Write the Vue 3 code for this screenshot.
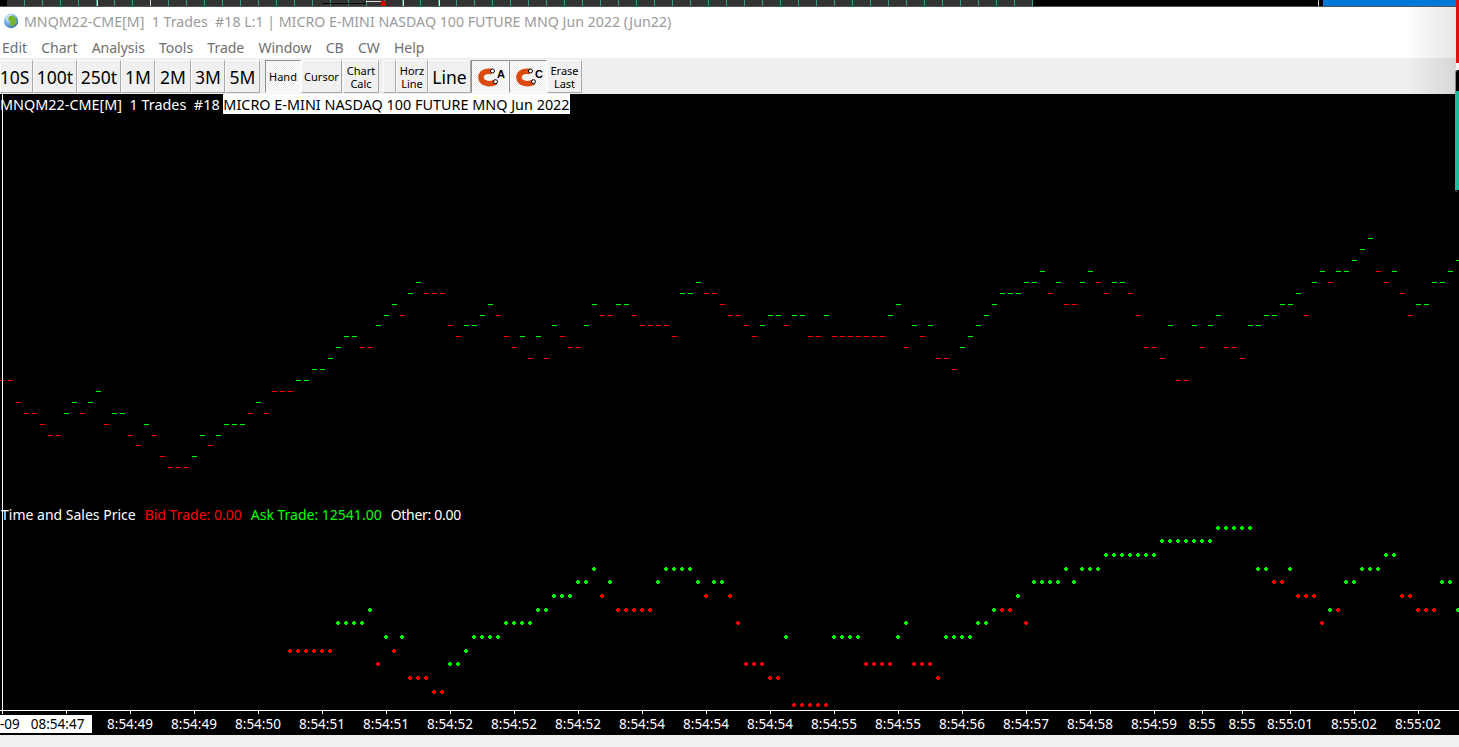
<template>
  <div class="screen">
    <svg class="behind" width="1459" height="7" viewBox="0 0 1459 7" shape-rendering="crispEdges">
      <rect x="0" y="0" width="1032" height="6" fill="#333" />
      <rect x="0" y="0" width="7" height="6" fill="#000" />
      <rect x="1032" y="0" width="427" height="7" fill="#000" />
      <rect v-for="x in stripTicks" :key="x" :x="x" y="0" width="1" height="6" fill="#2f9e8c" />
      <rect v-for="x in [97, 150, 403, 439]" :key="x" :x="x" y="0" width="1" height="6" fill="#ddd" />
      <rect x="322" y="3" width="44" height="1" fill="#000" />
      <rect x="366" y="1" width="15" height="1" fill="#ddd" />
      <rect x="381" y="1" width="5" height="5" fill="#e00000" />
      <rect x="1318" y="0" width="1" height="6" fill="#ccc" />
      <rect x="1323" y="0" width="133" height="6" fill="#0078d7" />
      <rect x="0" y="6" width="1459" height="1" fill="#555" />
    </svg>

    <div class="title-bar">
      <svg class="globe" width="16" height="16" viewBox="0 0 16 16">
        <defs>
          <radialGradient id="sea" cx="0.35" cy="0.25" r="0.85">
            <stop offset="0" stop-color="#e4f3fb" />
            <stop offset="0.55" stop-color="#6fb0dc" />
            <stop offset="1" stop-color="#2c5f96" />
          </radialGradient>
        </defs>
        <circle cx="8" cy="8" r="7.200" fill="url(#sea)" />
        <path d="M6 3.500 C8.500 2.500 11 3 12.500 5 C14 7 14 9.500 12.500 11 C11 12.500 9 13.500 7.500 13 C7 11 8 9.500 6.800 8.500 C5.200 7.500 4.800 5 6 3.500z" fill="#7ab42e" />
      </svg>
      <span>MNQM22-CME[M]&nbsp; 1 Trades&nbsp; #18 L:1 | MICRO E-MINI NASDAQ 100 FUTURE MNQ Jun 2022 (Jun22)</span>
    </div>

    <div class="menu-bar">
      <span v-for="item in menus" :key="item">{{ item }}</span>
    </div>

    <div class="tool-bar">
      <template v-for="btn in buttons" :key="btn.id">
        <div
          class="tool-btn"
          :class="{ big: btn.big, down: btn.down, first: btn.id === '10s' }"
          :style="{ width: btn.w + 'px', marginLeft: (btn.gap || 0) + 'px' }"
        >
          <template v-if="btn.magnet">
            <svg width="36" height="31" viewBox="0 0 36 31">
              <path d="M20 10.500 C12 9 8.500 13 9 17 C9.500 22 17 24.500 24 21" fill="none" stroke="#dd4a10" stroke-width="5.500" />
              <circle cx="20.500" cy="10" r="2" fill="#fff" stroke="#000" stroke-width="1" />
              <circle cx="23.500" cy="20.700" r="2" fill="#fff" stroke="#000" stroke-width="1" />
              <text x="25" y="16.500" class="magnet-letter">{{ btn.magnet }}</text>
            </svg>
          </template>
          <template v-else>
            <span v-for="line in btn.lines" :key="line">{{ line }}</span>
          </template>
        </div>
      </template>
    </div>

    <div class="chart">
      <svg class="plot" width="1459" height="620" viewBox="0 94 1459 620" shape-rendering="crispEdges">
        <path :d="tickPath(1)" fill="#00ff00" />
        <path :d="tickPath(-1)" fill="#ff0000" />
        <path :d="dotPath(1)" fill="#00ff00" />
        <path :d="dotPath(-1)" fill="#ff0000" />
        <rect x="2" y="94" width="1" height="616" fill="#fff" />
        <rect x="0" y="710" width="1459" height="1" fill="#fff" />
        <rect v-for="x in axisTicks" :key="x" :x="x" y="710" width="1" height="4" fill="#fff" />
      </svg>
      <div class="legend first">
        <span class="white">MNQM22-CME[M]&nbsp; 1 Trades&nbsp; #18&nbsp;</span>
        <span class="inverted">MICRO E-MINI NASDAQ 100 FUTURE MNQ Jun 2022</span>
      </div>
      <div class="legend second">
        <span class="white">Time and Sales Price</span>
        <span class="red">Bid Trade: 0.00</span>
        <span class="green">Ask Trade: 12541.00</span>
        <span class="white other">Other: 0.00</span>
      </div>
    </div>

    <div class="axis">
      <div class="axis-first">-09&nbsp; 08:54:47</div>
      <span v-for="(label, i) in axisLabels" :key="i" :style="{ width: label.w + 'px' }">{{ label.t }}</span>
    </div>

    <div class="status-bar"></div>

    <div class="edge-shadow"></div>
    <div class="other-window-red"></div>
    <div class="other-window">
      <div class="other-teal"></div>
    </div>
  </div>
</template>

<script setup>
const menus = ['Edit', 'Chart', 'Analysis', 'Tools', 'Trade', 'Window', 'CB', 'CW', 'Help']

const buttons = [
  { id: '10s', w: 33, big: true, lines: ['10S'] },
  { id: '100t', w: 44, big: true, lines: ['100t'] },
  { id: '250t', w: 44, big: true, lines: ['250t'] },
  { id: '1m', w: 34, big: true, lines: ['1M'] },
  { id: '2m', w: 36, big: true, lines: ['2M'] },
  { id: '3m', w: 34, big: true, lines: ['3M'] },
  { id: '5m', w: 35, big: true, lines: ['5M'] },
  { id: 'hand', w: 36, gap: 5, down: true, lines: ['Hand'] },
  { id: 'cursor', w: 41, lines: ['Cursor'] },
  { id: 'calc', w: 36, gap: 1, lines: ['Chart', 'Calc'] },
  { id: 'blank', w: 13, gap: 4, lines: [] },
  { id: 'horz', w: 32, lines: ['Horz', 'Line'] },
  { id: 'line', w: 43, big: true, lines: ['Line'] },
  { id: 'magA', w: 38, down: true, magnet: 'A' },
  { id: 'magC', w: 38, down: true, magnet: 'C' },
  { id: 'erase', w: 35, lines: ['Erase', 'Last'] }
]

// positive y = green, negative y = red, one entry per 8px column starting at x=2
const topSeries = [
  -380, -380, -402, -413, -413, -424, -435, -435, 413, 402, -413, 402, 391, -424, 413, 413,
  -435, -445, 424, -435, -456, -467, -467, -467, 456, 435, -445, 435, 424, 424, 424, -413,
  402, -413, -391, -391, -391, 380, 380, 369, 369, 358, 347, 336, 336, -347, -347, 325,
  315, 304, -315, 293, 282, -293, -293, -293, -325, -336, 325, 325, 315, 304, -315, -336,
  -347, 336, -358, 336, -358, 325, -336, -347, -347, 325, 304, -315, -315, 304, 304, -315,
  -325, -325, -325, -325, -336, 293, 293, 282, -293, -293, -304, -315, -315, -325, -336, 325,
  315, 315, -325, 315, 315, -336, -336, 315, -336, -336, -336, -336, -336, -336, -336, 315,
  304, -347, 325, -336, 325, -358, -358, -369, 347, 336, 325, 315, 304, 293, 293, 293,
  282, 282, 271, -293, 282, -304, -304, 282, 271, -282, -293, 282, 282, -293, -315, -347,
  -347, -358, 325, -380, -380, 325, -347, 325, 315, -347, -347, -358, 325, 325, 315, 315,
  304, 304, 293, -315, 282, 271, -282, 271, 271, 260, 249, 238, -271, -282, 271, -293,
  -315, 304, 304, 282, 282, 271, 260
]

// same encoding, first entry is the column at x=290
const bottomSeries = [
  -651, -651, -651, -651, -651, -651, 623, 623, 623, 623, 610, -664, 637, -651, 637, -678,
  -678, -678, -692, -692, 664, 664, 651, 637, 637, 637, 637, 623, 623, 623, 623, 610,
  610, 596, 596, 596, 582, 582, 569, -596, 582, -610, -610, -610, -610, -610, 582, 569,
  569, 569, 569, 582, -596, 582, 582, -596, -623, -664, -664, -664, -678, -678, 637, -705,
  -705, -705, -705, -705, 637, 637, 637, 637, -664, -664, -664, -664, 637, 623, -664, -664,
  -664, -678, 637, 637, 637, 637, 623, 623, 610, -610, -610, 596, -623, 582, 582, 582,
  582, 569, 582, 569, 569, 569, 555, 555, 555, 555, 555, 555, 555, 541, 541, 541,
  541, 541, 541, 541, 528, 528, 528, 528, 528, 569, 569, -582, -582, 569, -596, -596,
  -596, -623, 610, -610, 582, 582, 569, 569, 569, 555, 555, -596, -596, -610, -610, -610,
  582, 582, 610
]

function tickPath(sign) {
  let d = ''
  topSeries.forEach((v, i) => {
    if (Math.sign(v) !== sign) return
    d += `M${i * 8} ${Math.abs(v)}h5v1h-5z`
  })
  return d
}

function dotPath(sign) {
  let d = ''
  bottomSeries.forEach((v, i) => {
    if (Math.sign(v) !== sign) return
    const x = 290 + i * 8
    const y = Math.abs(v)
    d += `M${x - 1} ${y - 2}h2v1h1v2h-1v1h-2v-1h-1v-2h1z`
  })
  return d
}

const stripTicks = Array.from({ length: 57 }, (_, i) => 24 + i * 18)

const axisLabels = [
  ...['8:54:49', '8:54:49', '8:54:50', '8:54:51', '8:54:51', '8:54:52', '8:54:52', '8:54:52', '8:54:54',
    '8:54:54', '8:54:54', '8:54:55', '8:54:55', '8:54:56', '8:54:57', '8:54:58', '8:54:59'].map(t => ({ t, w: 64 })),
  { t: '8:55', w: 32 },
  { t: '8:55', w: 48 },
  { t: '8:55:01', w: 48 },
  { t: '8:55:02', w: 80 },
  { t: '8:55:02', w: 48 }
]

const axisTicks = [2, 66, 130, 194, 258, 322, 386, 450, 514, 578, 642, 706, 770, 834, 898, 962, 1026, 1090, 1154, 1202, 1242, 1290, 1354, 1418]
</script>

<style>
html, body {
  margin: 0;
  background: #f0f0f0;
  overflow: hidden;
}
</style>

<style scoped>
.screen {
  position: relative;
  width: 1459px;
  height: 747px;
  overflow: hidden;
  font-family: "Noto Sans", "Open Sans", sans-serif;
  background: #f0f0f0;
}

.behind {
  display: block;
}

.title-bar {
  height: 28px;
  background: #fff;
  display: flex;
  align-items: center;
  color: #9b9b9b;
  font-size: 14.2px;
  padding-left: 3px;
  gap: 5px;
  white-space: nowrap;
}

.globe {
  flex: none;
}

.menu-bar {
  height: 23px;
  box-sizing: border-box;
  padding-top: 2px;
  background: #fff;
  display: flex;
  align-items: center;
  color: #6e6e6e;
  font-size: 14px;
  padding-left: 2px;
  gap: 14.2px;
}

.tool-bar {
  height: 36px;
  box-sizing: border-box;
  padding-top: 2px;
  background: #efefef;
  display: flex;
  align-items: flex-start;
}

.tool-btn {
  height: 33px;
  box-sizing: border-box;
  flex: none;
  display: flex;
  flex-direction: column;
  align-items: center;
  justify-content: center;
  border: 1px solid;
  border-color: #fbfbfb #a9a9a9 #a9a9a9 #fbfbfb;
  background: #f0f0f0;
  color: #000;
  font-size: 11px;
  line-height: 13px;
}

.tool-btn.big {
  font-size: 17.5px;
  line-height: 24px;
}

.tool-btn.first {
  padding-right: 4px;
}

.tool-btn.down {
  border-color: #8f8f8f #fff #fff #8f8f8f;
  background-color: #fff;
  background-image: repeating-conic-gradient(#ececec 0 25%, #fff 0 50%);
  background-size: 2px 2px;
}

.magnet-letter {
  font-size: 11px;
  font-weight: 700;
  fill: #000;
  font-family: "Liberation Sans", sans-serif;
}

.chart {
  position: relative;
  height: 620px;
  background: #000;
  font-size: 14px;
  line-height: 20px;
  white-space: nowrap;
}

.plot {
  position: absolute;
  left: 0;
  top: 0;
}

.legend {
  position: relative;
  display: flex;
  padding-left: 1px;
  height: 20px;
}

.legend.first {
  padding-left: 0;
  font-size: 14.4px;
  line-height: 22px;
}

.legend.second {
  margin-top: 391px;
  gap: 9px;
}

.other {
  letter-spacing: -0.3px;
}

.white {
  color: #fff;
}

.red {
  color: #ff0000;
}

.green {
  color: #00ff00;
}

.inverted {
  background: #fff;
  color: #000;
}

.axis {
  height: 21px;
  background: #000;
  color: #fff;
  display: flex;
  align-items: flex-start;
  font-size: 13.5px;
  line-height: 18px;
  white-space: nowrap;
}

.axis-first {
  width: 92px;
  height: 18px;
  margin-top: 1px;
  margin-right: 6px;
  flex: none;
  background: #fff;
  color: #000;
  overflow: hidden;
  word-spacing: 2px;
}

.axis span {
  flex: none;
  text-align: center;
  margin-top: 1px;
}

.status-bar {
  height: 12px;
  background: #f0f0f0;
}

/* bits of the windows behind this one */
.edge-shadow {
  position: absolute;
  right: 3px;
  top: 7px;
  width: 50px;
  height: 87px;
  background: linear-gradient(to right, rgba(0, 0, 0, 0), rgba(0, 0, 0, 0.1));
}

.other-window-red {
  position: absolute;
  right: 0;
  top: 0;
  width: 3px;
  height: 63px;
  background: #e01010;
}

.other-window {
  position: absolute;
  right: 0;
  top: 70px;
  width: 4px;
  height: 122px;
  box-sizing: border-box;
  border-left: 1px solid #8a8a8a;
  background: #000;
  border-radius: 3px 0 0 3px;
}

.other-teal {
  margin-top: 21px;
  height: 99px;
  background: #1abc9c;
}
</style>
